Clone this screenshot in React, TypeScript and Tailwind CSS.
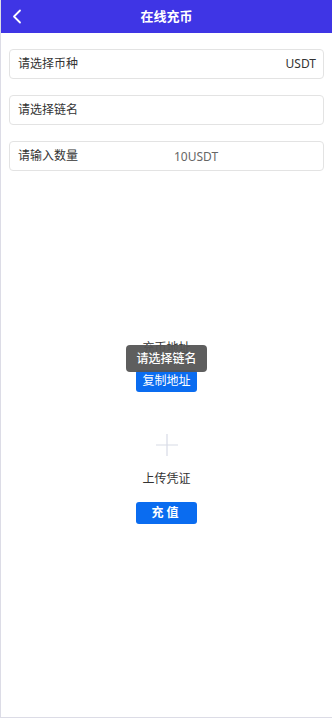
import React from "react";

const font = { fontFamily: '"Noto Sans", "Noto Sans CJK SC", sans-serif' };

function Field({ label, right, mid }: { label: string; right?: string; mid?: string }) {
  return (
    <div className="relative flex h-[30px] items-center rounded-[4px] border border-[#e3e3e3] bg-white pl-[8px] pr-[7px] text-[12px] text-[#333]">
      <span>{label}</span>
      {mid && <span className="absolute left-[164px] top-[6px] text-[12px] text-[#666]">{mid}</span>}
      {right && <span className="ml-auto text-[12px] text-[#333]">{right}</span>}
    </div>
  );
}

export default function App() {
  return (
    <div style={font} className="relative h-[719px] w-[332px] overflow-hidden bg-white">
      <div className="flex h-[718px] flex-col border-l border-b border-[#dcdce6]">
        <div className="relative flex h-[33px] shrink-0 items-center justify-center bg-[#3f35e5]">
          <svg className="absolute left-[10px] top-[9px]" width="12" height="15" viewBox="0 0 12 15" fill="none">
            <path d="M9 1.5 L3 7.5 L9 13.5" stroke="white" strokeWidth="1.8" strokeLinecap="round" strokeLinejoin="round" />
          </svg>
          <span className="text-[13px] font-bold text-white">在线充币</span>
        </div>
        <div className="flex flex-col gap-[16px] px-[8px] pt-[16px]">
          <Field label="请选择币种" right="USDT" />
          <Field label="请选择链名" />
          <Field label="请输入数量" mid="10USDT" />
        </div>
        <div className="mt-[170px] flex flex-col items-center">
          <span className="text-[12px] leading-[14px] text-[#333]">充币地址</span>
          <button className="mt-[15px] flex h-[22px] w-[61px] items-center justify-center rounded-[3px] bg-[#0a6cf0] text-[12px] text-white">
            复制地址
          </button>
          <svg className="mt-[42px]" width="22" height="22" viewBox="0 0 22 22">
            <path d="M11 0 V22 M0 11 H22" stroke="#d8dbe6" strokeWidth="1.2" />
          </svg>
          <span className="mt-[16px] text-[12px] leading-[14px] text-[#333]">上传凭证</span>
          <button className="mt-[16px] flex h-[22px] w-[61px] items-center justify-center rounded-[3px] bg-[#0a6cf0] text-[12px] font-semibold tracking-[3px] text-white">
            充值
          </button>
        </div>
      </div>
      <div className="absolute left-[126px] top-[345px] flex h-[27px] w-[81px] items-center justify-center rounded-[4px] bg-[#555555]/95 text-[12px] font-medium text-white">
        请选择链名
      </div>
    </div>
  );
}
